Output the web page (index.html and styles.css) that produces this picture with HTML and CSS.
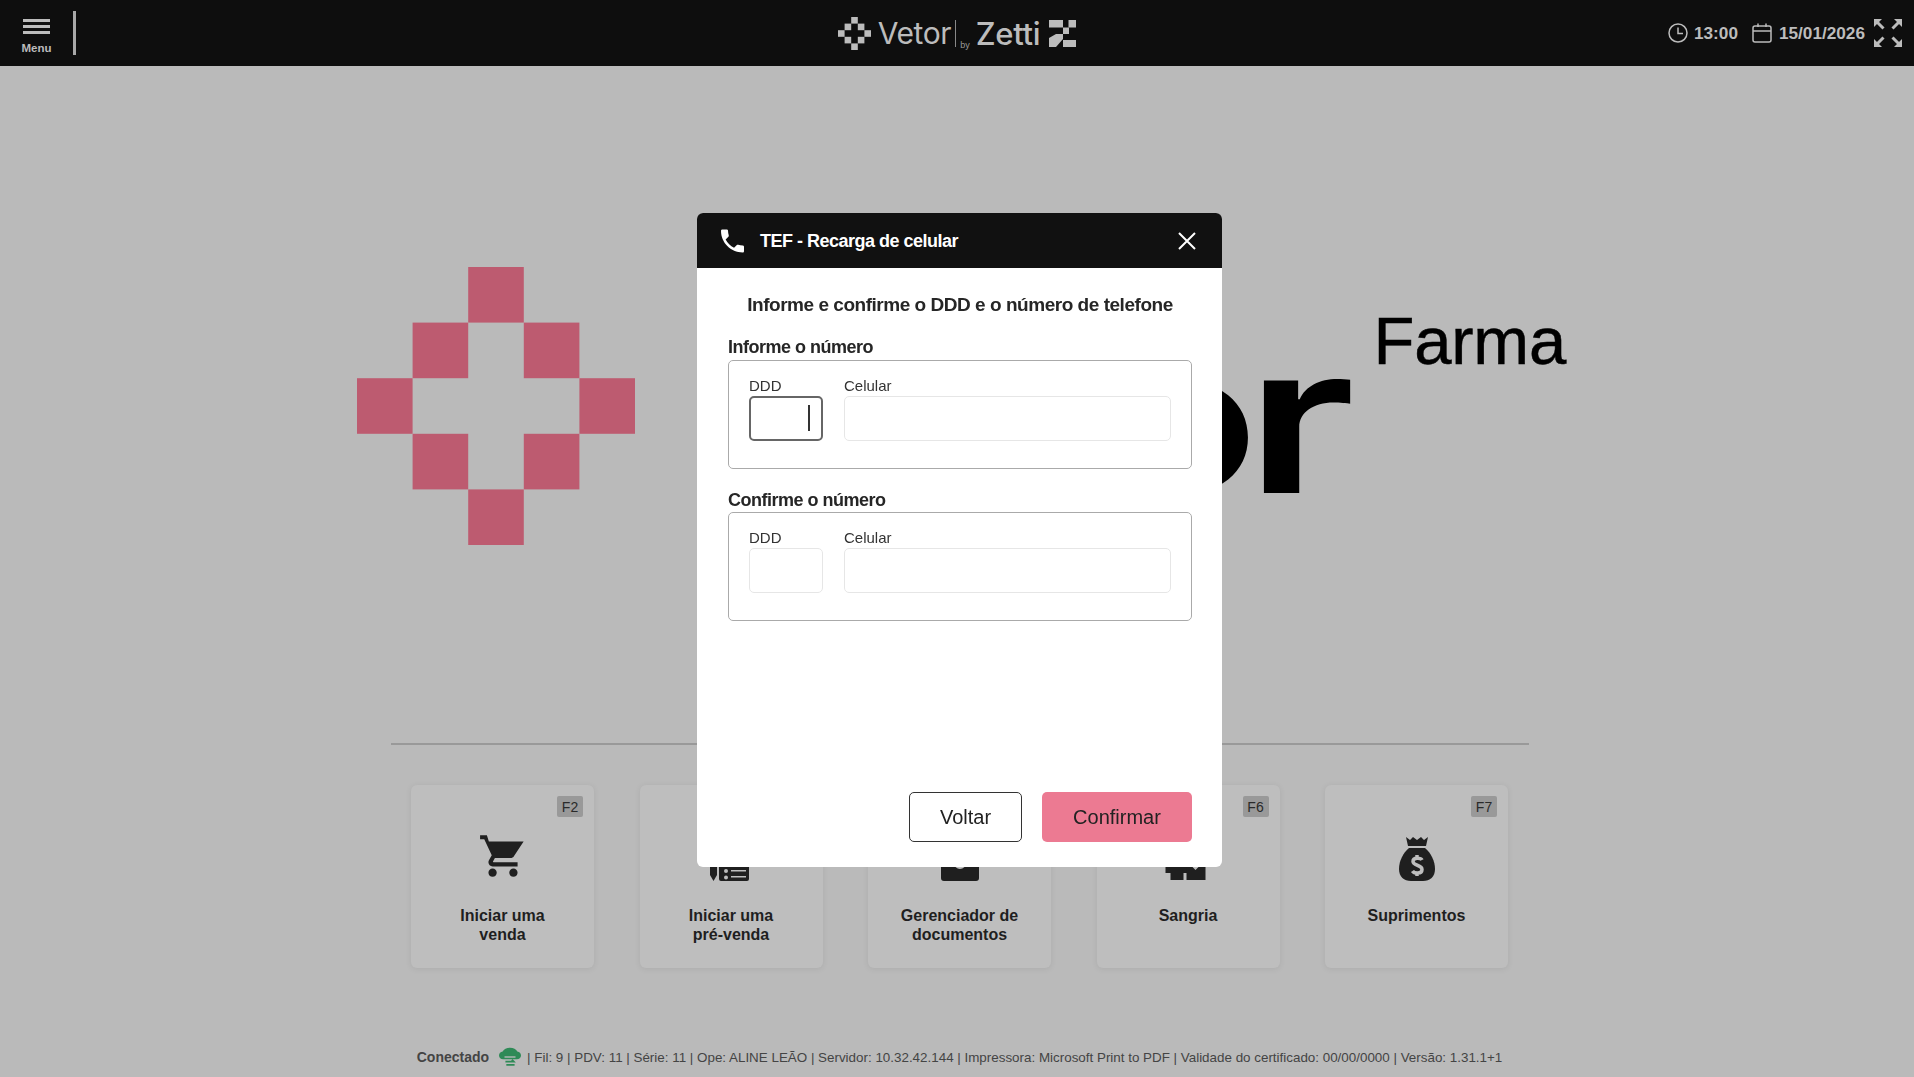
FILE: index.html
```html
<!DOCTYPE html>
<html lang="pt-BR">
<head>
  <meta charset="UTF-8" />
  <title>Vetor Farma - PDV</title>
  <link rel="stylesheet" href="styles.css">
</head>
<body>
  <svg class="defs" width="0" height="0">
    <symbol id="vetor-mark" viewBox="0 0 5 5">
      <rect x="2" y="0" width="1" height="1"/>
      <rect x="1" y="1" width="1" height="1"/>
      <rect x="3" y="1" width="1" height="1"/>
      <rect x="0" y="2" width="1" height="1"/>
      <rect x="4" y="2" width="1" height="1"/>
      <rect x="1" y="3" width="1" height="1"/>
      <rect x="3" y="3" width="1" height="1"/>
      <rect x="2" y="4" width="1" height="1"/>
    </symbol>
  </svg>

  <header class="topbar">
    <div class="topbar-left">
      <div class="menu-btn">
        <span class="burger"><i></i><i></i><i></i></span>
        <span class="menu-label">Menu</span>
      </div>
      <div class="topbar-divider"></div>
    </div>

    <div class="brand">
      <svg class="brand-mark"><use href="#vetor-mark"/></svg>
      <span class="brand-vetor">Vetor</span>
      <span class="brand-sep"></span>
      <span class="brand-by">by</span>
      <span class="brand-zetti">Zetti</span>
      <svg class="brand-z" viewBox="0 0 27 27">
        <path d="M0 0h14v7.500H0z"/>
        <path d="M19.500 0H27v7.500h-7.500z"/>
        <path d="M14 7.500h6V14h-6v5l-7 8H0v-9l7-4h7z"/>
        <path d="M14 20h13v7H14z"/>
      </svg>
    </div>

    <div class="topbar-right">
      <svg class="ico-clock" viewBox="0 0 20 20"><circle cx="10" cy="10" r="9"/><path d="M10 4.500V10.500H15"/></svg>
      <span class="clock-text">13:00</span>
      <svg class="ico-cal" viewBox="0 0 20 20"><rect x="1" y="3" width="18" height="16" rx="2"/><path d="M1 8H19M6 0.500V4M14 0.500V4"/></svg>
      <span class="date-text">15/01/2026</span>
      <svg class="ico-expand" viewBox="0 0 28 28">
        <path class="arrow-head" d="M0 0h8L0 8z"/><path d="M2 2L9.500 9.500"/>
        <path class="arrow-head" d="M28 0h-8l8 8z"/><path d="M26 2L18.500 9.500"/>
        <path class="arrow-head" d="M0 28h8L0 20z"/><path d="M2 26L9.500 18.500"/>
        <path class="arrow-head" d="M28 28h-8l8-8z"/><path d="M26 26L18.500 18.500"/>
      </svg>
    </div>
  </header>

  <main class="home">
    <section class="hero">
      <svg class="hero-mark"><use href="#vetor-mark"/></svg>
      <span class="hero-word">Vetor</span>
      <span class="hero-farma">Farma</span>
    </section>

    <div class="home-line"></div>

    <div class="shortcuts">
      <div class="card">
        <span class="badge">F2</span>
        <svg class="card-ico cart" viewBox="0 0 24 24"><path d="M7 18c-1.100 0-1.990.9-1.990 2S5.900 22 7 22s2-.9 2-2-.9-2-2-2zM1 2v2h2l3.600 7.590-1.350 2.450c-.16.28-.25.61-.25.96 0 1.100.9 2 2 2h12v-2H7.420c-.14 0-.25-.11-.25-.25l.03-.12.9-1.630h7.450c.75 0 1.410-.41 1.750-1.030L21.900 5H5.210l-.94-3H1zm16 16c-1.100 0-1.990.9-1.990 2s.89 2 1.990 2 2-.9 2-2-.9-2-2-2z"/></svg>
        <span class="card-label">Iniciar uma<br>venda</span>
      </div>
      <div class="card">
        <span class="badge">F3</span>
        <svg class="card-ico" viewBox="0 0 48 48">
          <path d="M3 20h7v22l-3.500 6L3 42z"/>
          <path fill-rule="evenodd" d="M14 12h26a2 2 0 0 1 2 2v32a2 2 0 0 1-2 2H14a2 2 0 0 1-2-2V14a2 2 0 0 1 2-2zm5 24a2 2 0 1 0 0 4 2 2 0 0 0 0-4zm0 6.500a2 2 0 1 0 0 4 2 2 0 0 0 0-4zM24 37v1.500h15V37zm0 6v1.500h15V43z"/>
        </svg>
        <span class="card-label">Iniciar uma<br>pré-venda</span>
      </div>
      <div class="card">
        <span class="badge">F4</span>
        <svg class="card-ico" viewBox="0 0 48 48">
          <path fill-rule="evenodd" d="M8 8h32a3 3 0 0 1 3 3v34a3 3 0 0 1-3 3H8a3 3 0 0 1-3-3V11a3 3 0 0 1 3-3zm16 16a6 6 0 1 0 0 12 6 6 0 0 0 0-12z"/>
        </svg>
        <span class="card-label">Gerenciador de<br>documentos</span>
      </div>
      <div class="card">
        <span class="badge">F6</span>
        <svg class="card-ico" viewBox="0 0 48 48">
          <path d="M1.500 12h23v28h-5v7h-13v-7h-5z"/>
          <path d="M22.500 32h4l5 5 6-6h4v16h-19z"/>
        </svg>
        <span class="card-label">Sangria</span>
      </div>
      <div class="card">
        <span class="badge">F7</span>
        <svg class="card-ico" viewBox="0 0 48 48">
          <g transform="translate(0 2)">
            <path d="M13 2l4 3 3-3 4 3 4-3 3 3 4-3-2 9H15z"/>
            <path d="M16 13h16c6 5 10 13 10 21 0 8-5 12-12 12H18C11 46 6 42 6 34c0-8 4-16 10-21z"/>
            <path class="bag-sign" d="M29 25c-1-2-9-3-9 1.500s9 3 9 8-8 4-9.500 1.500M24 20v3M24 38v3"/>
          </g>
        </svg>
        <span class="card-label">Suprimentos</span>
      </div>
    </div>

    <footer class="statusbar">
      <strong>Conectado</strong>
      <svg class="ico-cloud" viewBox="0 0 24 20">
        <path d="M4.500 12.500C2 12.500 0 10.800 0 8.300c0-2.300 1.700-4.100 4-4.300C5.200 1.600 8.300 0 12 0s6.800 1.600 8 4c2.300.2 4 2 4 4.300 0 2.500-2 4.200-4.500 4.200z"/>
        <path class="cloud-gap" d="M6 10h12"/>
        <path class="cloud-arrows" d="M7 15h9l-2-2M17 18.500H8"/>
      </svg>
      <span>| Fil: 9 | PDV: 11 | Série: 11 | Ope: ALINE LEÃO | Servidor: 10.32.42.144 | Impressora: Microsoft Print to PDF | Validade do certificado: 00/00/0000 | Versão: 1.31.1+1</span>
    </footer>
  </main>

  <div class="overlay">
    <div class="modal">
      <div class="modal-head">
        <svg class="ico-phone" viewBox="3 3 18 18"><path d="M6.620 10.790c1.440 2.830 3.760 5.140 6.590 6.590l2.200-2.200c.27-.27.67-.36 1.020-.24 1.120.37 2.330.57 3.570.57.55 0 1 .45 1 1V20c0 .55-.45 1-1 1-9.390 0-17-7.610-17-17 0-.55.45-1 1-1h3.500c.55 0 1 .45 1 1 0 1.250.2 2.450.57 3.570.11.35.03.74-.25 1.020l-2.200 2.200z"/></svg>
        <span class="modal-title">TEF - Recarga de celular</span>
        <svg class="ico-close" viewBox="0 0 18 18"><path d="M1 1L17 17M17 1L1 17"/></svg>
      </div>
      <div class="modal-body">
        <h2 class="modal-sub">Informe e confirme o DDD e o número de telefone</h2>

        <div class="num-title">Informe o número</div>
        <div class="num-box">
          <div class="field field-ddd">
            <label>DDD</label>
            <div class="input-wrap">
              <input class="input input-focus" type="text">
              <span class="caret"></span>
            </div>
          </div>
          <div class="field field-cel">
            <label>Celular</label>
            <input class="input" type="text">
          </div>
        </div>

        <div class="num-title second">Confirme o número</div>
        <div class="num-box">
          <div class="field field-ddd">
            <label>DDD</label>
            <input class="input" type="text">
          </div>
          <div class="field field-cel">
            <label>Celular</label>
            <input class="input" type="text">
          </div>
        </div>

        <div class="modal-actions">
          <button class="btn btn-back">Voltar</button>
          <button class="btn btn-ok">Confirmar</button>
        </div>
      </div>
    </div>
  </div>
</body>
</html>
```

FILE: styles.css
```css
* {
  box-sizing: border-box;
}
html, body {
  height: 100%;
}
body {
  margin: 0;
  display: flex;
  flex-direction: column;
  overflow: hidden;
  background: #bababa;
  color: #1f1f1f;
  font-family: 'Liberation Sans', Arial, sans-serif;
}
.defs {
  position: absolute;
}

/* top bar */
.topbar {
  height: 66px;
  flex: none;
  display: grid;
  grid-template-columns: 1fr auto 1fr;
  align-items: center;
  background: #0e0e0e;
  color: #bcbcbc;
}
.topbar-left {
  display: flex;
  align-items: center;
  padding-left: 21px;
  gap: 21px;
}
.menu-btn {
  width: 31px;
  display: flex;
  flex-direction: column;
  align-items: center;
}
.burger {
  display: flex;
  flex-direction: column;
  gap: 3px;
  margin-top: 6px;
}
.burger i {
  display: block;
  width: 27px;
  height: 3px;
  background: #bcbcbc;
}
.menu-label {
  margin-top: 8px;
  font-size: 11.5px;
  font-weight: 700;
}
.topbar-divider {
  width: 3px;
  height: 44px;
  background: #a8a8a8;
}
.brand {
  display: flex;
  align-items: center;
}
.brand-mark {
  width: 33px;
  height: 33px;
  fill: #bcbcbc;
}
.brand-vetor {
  margin-left: 7px;
  font-family: 'Inter', sans-serif;
  font-size: 30px;
  font-weight: 400;
  letter-spacing: -0.4px;
}
.brand-sep {
  width: 1px;
  height: 27px;
  margin-left: 4px;
  background: #888;
}
.brand-by {
  align-self: flex-end;
  margin: 0 6px 2px 4px;
  font-size: 9px;
  color: #999;
}
.brand-zetti {
  font-family: 'Inter', sans-serif;
  font-size: 31px;
  font-weight: 500;
  letter-spacing: -0.3px;
}
.brand-z {
  width: 27px;
  height: 27px;
  margin-left: 9px;
  fill: #bcbcbc;
}
.topbar-right {
  display: flex;
  align-items: center;
  justify-content: flex-end;
  padding-right: 12px;
  font-size: 17.2px;
  font-weight: 700;
}
.ico-clock, .ico-cal {
  width: 20px;
  height: 20px;
  fill: none;
  stroke: #bcbcbc;
  stroke-width: 1.5;
}
.clock-text {
  margin: 0 14px 0 6px;
}
.date-text {
  margin: 0 9px 0 7px;
}
.ico-expand {
  width: 28px;
  height: 28px;
  fill: none;
  stroke: #bcbcbc;
  stroke-width: 3;
}
.ico-expand .arrow-head {
  fill: #bcbcbc;
  stroke: none;
}

/* home behind the dialog */
.home {
  flex: 1;
  display: flex;
  flex-direction: column;
  align-items: center;
  padding-left: 5px;
  min-height: 0;
}
.hero {
  width: 1914px;
  height: 677px;
  flex: none;
  align-self: flex-start;
  margin-left: -5px;
  display: flex;
  align-items: flex-start;
  justify-content: flex-end;
  padding: 201px 348px 0 357px;
}
.hero-mark {
  width: 278px;
  height: 278px;
  margin-right: auto;
  fill: #bd5b70;
}
.hero-word {
  font-family: 'Inter', sans-serif;
  font-size: 206px;
  font-weight: 600;
  line-height: 1;
  letter-spacing: -11px;
  color: #000;
  margin-top: 48px;
  transform: scaleX(1.35);
  transform-origin: right center;
  clip-path: inset(0 -40px 0 50%);
}
.hero-farma {
  margin: 40px 0 0 33px;
  font-size: 67px;
  line-height: 1;
  letter-spacing: -0.2px;
  color: #000;
  -webkit-text-stroke: 0.5px #000;
}
.home-line {
  width: 1138px;
  height: 2px;
  flex: none;
  background: #999;
}
.shortcuts {
  display: flex;
  gap: 45.5px;
  margin-top: 40px;
}
.card {
  position: relative;
  width: 183px;
  height: 183px;
  padding-top: 48px;
  display: flex;
  flex-direction: column;
  align-items: center;
  border-radius: 6px;
  background: #bebebe;
  box-shadow: 0 1px 6px rgba(0, 0, 0, 0.08);
}
.badge {
  position: absolute;
  top: 11px;
  right: 11px;
  width: 26px;
  height: 21px;
  display: flex;
  align-items: center;
  justify-content: center;
  border-radius: 2px;
  background: #999;
  font-size: 14px;
  color: #2a2a2a;
}
.card-ico {
  width: 48px;
  height: 48px;
  flex: none;
  fill: #1f1f1f;
}
.card-ico.cart {
  width: 50px;
  height: 50px;
  margin-top: -2px;
}
.card-label {
  margin-top: 25px;
  text-align: center;
  font-size: 16px;
  line-height: 19px;
  font-weight: 700;
}
.bag-sign {
  fill: none;
  stroke: #bebebe;
  stroke-width: 3.5;
}
.statusbar {
  margin-top: auto;
  padding-bottom: 10px;
  display: flex;
  align-items: center;
  height: 30px;
  font-size: 13.4px;
  color: #444;
  white-space: nowrap;
}
.statusbar strong {
  font-size: 14px;
}
.ico-cloud {
  width: 22px;
  height: 20px;
  margin: 0 6px 0 10px;
  fill: #2f8a57;
}
.cloud-gap {
  fill: none;
  stroke: #bababa;
  stroke-width: 1.5;
}
.cloud-arrows {
  fill: none;
  stroke: #2f8a57;
  stroke-width: 2;
}

/* dialog */
.overlay {
  position: fixed;
  inset: 0;
  display: flex;
  justify-content: center;
  align-items: flex-start;
  padding: 213px 0 0 5px;
}
.modal {
  width: 525px;
  height: 654px;
  display: flex;
  flex-direction: column;
  overflow: hidden;
  border-radius: 6px;
  background: #fff;
}
.modal-head {
  height: 55px;
  flex: none;
  display: flex;
  align-items: center;
  padding: 0 26px 0 24px;
  background: #111;
  color: #fff;
}
.ico-phone {
  width: 23px;
  height: 24px;
  fill: #fff;
}
.modal-title {
  margin: 1px 0 0 16px;
  font-size: 18px;
  font-weight: 700;
  letter-spacing: -0.5px;
}
.ico-close {
  width: 18px;
  height: 18px;
  margin-left: auto;
  fill: none;
  stroke: #fff;
  stroke-width: 2;
}
.modal-body {
  flex: 1;
  display: flex;
  flex-direction: column;
  padding: 25px 30px 25px 31px;
}
.modal-sub {
  margin: 0;
  text-align: center;
  font-size: 19px;
  line-height: 24px;
  font-weight: 700;
  letter-spacing: -0.47px;
  color: #262626;
}
.num-title {
  margin: 19px 0 2px;
  font-size: 18px;
  line-height: 22px;
  font-weight: 700;
  letter-spacing: -0.5px;
  color: #262626;
}
.num-title.second {
  margin: 20px 0 1px;
}
.num-box {
  width: 464px;
  height: 109px;
  display: flex;
  gap: 21px;
  padding: 16px 20px 0;
  border: 1.5px solid #aaa;
  border-radius: 5px;
}
.field label {
  display: block;
  height: 19px;
  font-size: 15px;
  line-height: 18px;
  color: #333;
}
.field-ddd {
  width: 74px;
}
.field-cel {
  flex: 1;
}
.input-wrap {
  position: relative;
}
.input {
  display: block;
  width: 100%;
  height: 45px;
  border: 1.5px solid #e6e6e6;
  border-radius: 5px;
  background: #fff;
  outline: none;
}
.input-focus {
  border: 2.5px solid #666;
}
.caret {
  position: absolute;
  top: 9px;
  right: 13px;
  width: 2px;
  height: 26px;
  background: #333;
}
.modal-actions {
  margin-top: auto;
  display: flex;
  justify-content: flex-end;
  gap: 20px;
}
.btn {
  height: 50px;
  border-radius: 5px;
  font-family: inherit;
  font-size: 20px;
  color: #222;
  cursor: pointer;
}
.btn-back {
  width: 113px;
  border: 1.5px solid #333;
  background: #fff;
}
.btn-ok {
  width: 150px;
  border: none;
  background: #ec7a92;
}
```
